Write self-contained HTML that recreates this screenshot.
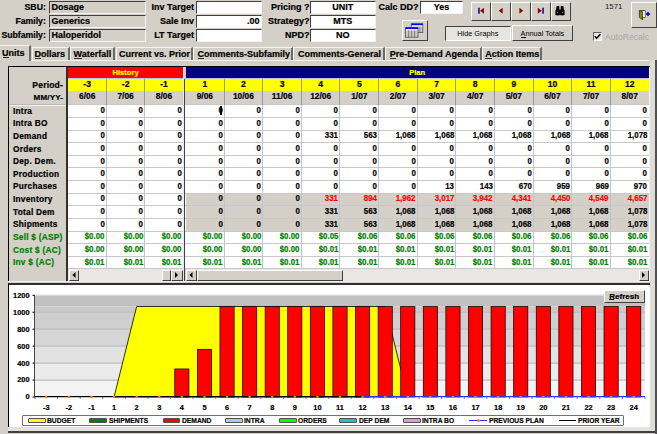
<!DOCTYPE html>
<html><head><meta charset="utf-8"><style>
html,body{margin:0;padding:0;}
body{width:657px;height:434px;overflow:hidden;position:relative;background:#d4d0c8;font-family:"Liberation Sans", sans-serif;font-weight:bold;}
.t{position:absolute;white-space:nowrap;-webkit-text-stroke:0.2px currentColor;}
.c{display:inline-block;transform:translateX(-50%);}
.r{position:absolute;}
</style></head><body>
<div class="t" style="top:2.94px;font-size:8.7px;line-height:8.7px;color:#000;right:611.2px;">SBU:</div>
<div class="r" style="left:49px;top:1px;width:97px;height:12.6px;background:#d4d0c8;border-top:1.5px solid #404040;border-left:1.5px solid #404040;border-bottom:1px solid #f4f4f4;border-right:1px solid #f4f4f4;box-sizing:border-box;"></div>
<div class="t" style="top:2.68px;font-size:9px;line-height:9px;color:#000;left:51.5px;">Dosage</div>
<div class="t" style="top:16.89px;font-size:8.7px;line-height:8.7px;color:#000;right:611.2px;">Family:</div>
<div class="r" style="left:49px;top:15.1px;width:97px;height:12.6px;background:#d4d0c8;border-top:1.5px solid #404040;border-left:1.5px solid #404040;border-bottom:1px solid #f4f4f4;border-right:1px solid #f4f4f4;box-sizing:border-box;"></div>
<div class="t" style="top:16.63px;font-size:9px;line-height:9px;color:#000;left:51.5px;">Generics</div>
<div class="t" style="top:30.84px;font-size:8.7px;line-height:8.7px;color:#000;right:611.2px;">Subfamily:</div>
<div class="r" style="left:49px;top:29.2px;width:97px;height:12.6px;background:#d4d0c8;border-top:1.5px solid #404040;border-left:1.5px solid #404040;border-bottom:1px solid #f4f4f4;border-right:1px solid #f4f4f4;box-sizing:border-box;"></div>
<div class="t" style="top:30.58px;font-size:9px;line-height:9px;color:#000;left:51.5px;">Haloperidol</div>
<div class="t" style="top:2.68px;font-size:9px;line-height:9px;color:#000;right:463.1px;">Inv Target</div>
<div class="r" style="left:196px;top:1px;width:65.5px;height:12.6px;background:#fff;border-top:1.5px solid #404040;border-left:1.5px solid #404040;border-bottom:1px solid #f4f4f4;border-right:1px solid #f4f4f4;box-sizing:border-box;"></div>
<div class="t" style="top:16.63px;font-size:9px;line-height:9px;color:#000;right:463.1px;">Sale Inv</div>
<div class="r" style="left:196px;top:15.1px;width:65.5px;height:12.6px;background:#fff;border-top:1.5px solid #404040;border-left:1.5px solid #404040;border-bottom:1px solid #f4f4f4;border-right:1px solid #f4f4f4;box-sizing:border-box;"></div>
<div class="t" style="top:16.63px;font-size:9px;line-height:9px;color:#000;right:397.5px;">.00</div>
<div class="t" style="top:30.58px;font-size:9px;line-height:9px;color:#000;right:463.1px;">LT Target</div>
<div class="r" style="left:196px;top:29.2px;width:65.5px;height:12.6px;background:#fff;border-top:1.5px solid #404040;border-left:1.5px solid #404040;border-bottom:1px solid #f4f4f4;border-right:1px solid #f4f4f4;box-sizing:border-box;"></div>
<div class="t" style="top:2.68px;font-size:9px;line-height:9px;color:#000;right:347.5px;">Pricing ?</div>
<div class="r" style="left:310px;top:1px;width:65.5px;height:12.6px;background:#fff;border-top:1.5px solid #404040;border-left:1.5px solid #404040;border-bottom:1px solid #f4f4f4;border-right:1px solid #f4f4f4;box-sizing:border-box;"></div>
<div class="t" style="top:2.68px;font-size:9px;line-height:9px;color:#000;left:342.8px;width:0;text-align:center;"><span class="c">UNIT</span></div>
<div class="t" style="top:16.63px;font-size:9px;line-height:9px;color:#000;right:347.5px;">Strategy?</div>
<div class="r" style="left:310px;top:15.1px;width:65.5px;height:12.6px;background:#fff;border-top:1.5px solid #404040;border-left:1.5px solid #404040;border-bottom:1px solid #f4f4f4;border-right:1px solid #f4f4f4;box-sizing:border-box;"></div>
<div class="t" style="top:16.63px;font-size:9px;line-height:9px;color:#000;left:342.8px;width:0;text-align:center;"><span class="c">MTS</span></div>
<div class="t" style="top:30.58px;font-size:9px;line-height:9px;color:#000;right:347.5px;">NPD?</div>
<div class="r" style="left:310px;top:29.2px;width:65.5px;height:12.6px;background:#fff;border-top:1.5px solid #404040;border-left:1.5px solid #404040;border-bottom:1px solid #f4f4f4;border-right:1px solid #f4f4f4;box-sizing:border-box;"></div>
<div class="t" style="top:30.58px;font-size:9px;line-height:9px;color:#000;left:342.8px;width:0;text-align:center;"><span class="c">NO</span></div>
<div class="t" style="top:2.68px;font-size:9px;line-height:9px;color:#000;left:378.5px;">Calc DD?</div>
<div class="r" style="left:420px;top:1px;width:43px;height:12.6px;background:#fff;border-top:1.5px solid #404040;border-left:1.5px solid #404040;border-bottom:1px solid #f4f4f4;border-right:1px solid #f4f4f4;box-sizing:border-box;"></div>
<div class="t" style="top:2.68px;font-size:9px;line-height:9px;color:#000;left:441.5px;width:0;text-align:center;"><span class="c">Yes</span></div>
<div class="r" style="left:402px;top:20px;width:26px;height:20.5px;background:#d4d0c8;border-top:1px solid #fff;border-left:1px solid #fff;border-bottom:1.6px solid #404040;border-right:1.6px solid #404040;box-sizing:border-box;"></div>
<svg class="r" style="left:0;top:0" width="657" height="45" viewBox="0 0 657 45">
<rect x="411.3" y="23.8" width="11.5" height="8.8" fill="#c8c8c8" stroke="#505050" stroke-width="0.8"/>
<rect x="411.3" y="23.6" width="11.5" height="1.8" fill="#0000ff"/>
<rect x="411.8" y="25.4" width="10.5" height="1.2" fill="#fff"/>
<path d="M414.2 26.6V32.4M417 26.6V32.4M419.8 26.6V32.4" stroke="#606060" stroke-width="0.7"/>
<rect x="405.5" y="27.6" width="12.5" height="9.6" fill="#c8c8c8" stroke="#505050" stroke-width="0.8"/>
<rect x="405.5" y="27.4" width="12.5" height="1.8" fill="#0000ff"/>
<rect x="406" y="29.2" width="11.5" height="1.2" fill="#fff"/>
<path d="M408.6 30.4V37M411.6 30.4V37M414.6 30.4V37" stroke="#606060" stroke-width="0.7"/>
</svg>
<div class="r" style="left:471px;top:2px;width:20px;height:19px;background:#d4d0c8;border-top:1px solid #fff;border-left:1px solid #fff;border-bottom:1.6px solid #404040;border-right:1.6px solid #404040;box-sizing:border-box;"></div>
<div class="r" style="left:491px;top:2px;width:20px;height:19px;background:#d4d0c8;border-top:1px solid #fff;border-left:1px solid #fff;border-bottom:1.6px solid #404040;border-right:1.6px solid #404040;box-sizing:border-box;"></div>
<div class="r" style="left:511px;top:2px;width:20px;height:19px;background:#d4d0c8;border-top:1px solid #fff;border-left:1px solid #fff;border-bottom:1.6px solid #404040;border-right:1.6px solid #404040;box-sizing:border-box;"></div>
<div class="r" style="left:531px;top:2px;width:20px;height:19px;background:#d4d0c8;border-top:1px solid #fff;border-left:1px solid #fff;border-bottom:1.6px solid #404040;border-right:1.6px solid #404040;box-sizing:border-box;"></div>
<div class="r" style="left:551px;top:2px;width:20px;height:19px;background:#d4d0c8;border-top:1px solid #fff;border-left:1px solid #fff;border-bottom:1.6px solid #404040;border-right:1.6px solid #404040;box-sizing:border-box;"></div>
<svg class="r" style="left:0;top:0" width="657" height="45" viewBox="0 0 657 45">
<rect x="478.2" y="7.7" width="1.5" height="6" fill="#0000a0"/>
<path d="M480 10.7L484 7.7V13.7Z" fill="#900000"/>
<path d="M498.8 10.7L502.6 7.7V13.7Z" fill="#900000"/>
<path d="M523.2 10.7L519.4 7.7V13.7Z" fill="#900000"/>
<path d="M541.8 10.7L537.8 7.7V13.7Z" fill="#900000"/>
<rect x="542.3" y="7.7" width="1.5" height="6" fill="#0000a0"/>
<g fill="#000">
<path d="M556.6 6H559.3V9.2L560 10V14.6H555.4V10.6L556.2 9.2Z"/>
<path d="M563.4 6H560.7V9.2L560 10V14.6H564.6V10.6L563.8 9.2Z"/>
<ellipse cx="557.7" cy="14.4" rx="2.3" ry="1.1"/><ellipse cx="562.3" cy="14.4" rx="2.3" ry="1.1"/>
</g>
<circle cx="557.4" cy="12.6" r="0.6" fill="#a0a0a0"/><circle cx="562.6" cy="12.6" r="0.6" fill="#a0a0a0"/>
<rect x="403" y="21" width="1" height="1" fill="none"/>
</svg>
<div class="t" style="top:3.2px;font-size:7.8px;line-height:7.8px;color:#202020;font-weight:normal;-webkit-text-stroke:0;left:605px;">1571</div>
<div class="r" style="left:631px;top:2px;width:25.5px;height:25.5px;background:#d4d0c8;border-top:1px solid #fff;border-left:1px solid #fff;border-bottom:1.6px solid #404040;border-right:1.6px solid #404040;box-sizing:border-box;"></div>
<svg class="r" style="left:0;top:0" width="657" height="30" viewBox="0 0 657 30">
<path d="M639.6 10.5H645.2V17.3H642.5" fill="#fff" stroke="#303030" stroke-width="0.8"/>
<rect x="642" y="11" width="2.6" height="6" fill="#fff"/>
<path d="M639.4 10.6L642.6 11.8V19.8L639.4 17.6Z" fill="#8a8a00" stroke="#202000" stroke-width="0.7"/>
<path d="M648 11.8L650.3 14L648 16.2L645.7 14Z" fill="#0000b0"/>
</svg>
<div class="r" style="left:444.5px;top:25.5px;width:66px;height:15px;background:#e6e4df;border-top:1.5px solid #404040;border-left:1.5px solid #404040;border-bottom:1px solid #fff;border-right:1px solid #fff;box-sizing:border-box;"></div>
<div class="t" style="top:30.42px;font-size:7.3px;line-height:7.3px;color:#000;font-weight:normal;-webkit-text-stroke:0;left:477.8px;width:0;text-align:center;"><span class="c">Hide Graphs</span></div>
<div class="r" style="left:512px;top:25px;width:61px;height:16px;background:#d4d0c8;border-top:1px solid #fff;border-left:1px solid #fff;border-bottom:1.6px solid #404040;border-right:1.6px solid #404040;box-sizing:border-box;"></div>
<div class="t" style="top:30.12px;font-size:7.3px;line-height:7.3px;color:#000;font-weight:normal;-webkit-text-stroke:0;left:542.4px;width:0;text-align:center;"><span class="c">Annual Totals</span></div>
<div class="r" style="left:520.8px;top:37px;width:5px;height:0.8px;background:#000;"></div>
<div class="r" style="left:593px;top:32px;width:8.5px;height:8.5px;background:#e8e6e2;border-top:1px solid #606060;border-left:1px solid #606060;border-bottom:1px solid #fff;border-right:1px solid #fff;box-sizing:border-box;"></div>
<svg class="r" style="left:593px;top:32px" width="9" height="9" viewBox="0 0 9 9"><path d="M1.8 4.2L3.6 6.2L7.4 2.2" stroke="#000" stroke-width="1.5" fill="none"/></svg>
<div class="t" style="top:32.72px;font-size:8.6px;line-height:8.6px;color:#a8a8a8;font-weight:normal;-webkit-text-stroke:0;left:605px;">AutoRecalc</div>
<div class="r" style="left:0px;top:60px;width:657px;height:1px;background:#f4f3f0;"></div>
<div class="r" style="left:0px;top:45px;width:31px;height:16px;background:#d4d0c8;border-top:1px solid #f4f3f0;border-right:2px solid #6a6a6a;box-sizing:border-box;"></div>
<div class="t" style="top:48.58px;font-size:9px;line-height:9px;color:#000;left:13.2px;width:0;text-align:center;"><span class="c"><span id="tab0">Units</span></span></div>
<div class="r" style="left:2.6px;top:57px;width:6.2px;height:0.9px;background:#202020;"></div>
<div class="r" style="left:32px;top:47px;width:37.5px;height:13px;background:#d4d0c8;border-top:1px solid #f4f3f0;border-left:1px solid #f4f3f0;border-right:2px solid #6a6a6a;box-sizing:border-box;"></div>
<div class="t" style="top:49.58px;font-size:9px;line-height:9px;color:#000;left:49.85px;width:0;text-align:center;"><span class="c">Dollars</span></div>
<div class="r" style="left:34.6px;top:58.2px;width:6.5px;height:0.9px;background:#303030;"></div>
<div class="r" style="left:70px;top:47px;width:45px;height:13px;background:#d4d0c8;border-top:1px solid #f4f3f0;border-left:1px solid #f4f3f0;border-right:2px solid #6a6a6a;box-sizing:border-box;"></div>
<div class="t" style="top:49.58px;font-size:9px;line-height:9px;color:#000;left:92.35px;width:0;text-align:center;"><span class="c">Waterfall</span></div>
<div class="r" style="left:73.51px;top:58.2px;width:8.5px;height:0.9px;background:#303030;"></div>
<div class="r" style="left:115.5px;top:47px;width:77px;height:13px;background:#d4d0c8;border-top:1px solid #f4f3f0;border-left:1px solid #f4f3f0;border-right:2px solid #6a6a6a;box-sizing:border-box;"></div>
<div class="t" style="top:49.58px;font-size:9px;line-height:9px;color:#000;left:154.6px;width:0;text-align:center;"><span class="c">Current vs. Prior</span></div>
<div class="r" style="left:193px;top:47px;width:99.5px;height:13px;background:#d4d0c8;border-top:1px solid #f4f3f0;border-left:1px solid #f4f3f0;border-right:2px solid #6a6a6a;box-sizing:border-box;"></div>
<div class="t" style="top:49.58px;font-size:9px;line-height:9px;color:#000;left:243.75px;width:0;text-align:center;"><span class="c">Comments-Subfamily</span></div>
<div class="r" style="left:197.5px;top:58.2px;width:6.5px;height:0.9px;background:#303030;"></div>
<div class="r" style="left:293px;top:47px;width:91.5px;height:13px;background:#d4d0c8;border-top:1px solid #f4f3f0;border-left:1px solid #f4f3f0;border-right:2px solid #6a6a6a;box-sizing:border-box;"></div>
<div class="t" style="top:49.58px;font-size:9px;line-height:9px;color:#000;left:339.5px;width:0;text-align:center;"><span class="c">Comments-General</span></div>
<div class="r" style="left:385px;top:47px;width:96.5px;height:13px;background:#d4d0c8;border-top:1px solid #f4f3f0;border-left:1px solid #f4f3f0;border-right:2px solid #6a6a6a;box-sizing:border-box;"></div>
<div class="t" style="top:49.58px;font-size:9px;line-height:9px;color:#000;left:433.85px;width:0;text-align:center;"><span class="c">Pre-Demand Agenda</span></div>
<div class="r" style="left:389.76px;top:58.2px;width:6px;height:0.9px;background:#303030;"></div>
<div class="r" style="left:482px;top:47px;width:60px;height:13px;background:#d4d0c8;border-top:1px solid #f4f3f0;border-left:1px solid #f4f3f0;border-right:2px solid #6a6a6a;box-sizing:border-box;"></div>
<div class="t" style="top:49.58px;font-size:9px;line-height:9px;color:#000;left:512.2px;width:0;text-align:center;"><span class="c">Action Items</span></div>
<div class="r" style="left:485.2px;top:58.2px;width:6.5px;height:0.9px;background:#303030;"></div>
<div class="r" style="left:8px;top:66px;width:649px;height:215.5px;background:#d4d0c8;border-top:1px solid #000;border-left:1px solid #000;box-sizing:border-box;"></div>
<div class="r" style="left:68px;top:67px;width:115.2px;height:10.5px;background:#ff0000;"></div>
<div class="t" style="top:68.57px;font-size:7.6px;line-height:7.6px;color:#ffff00;left:125.6px;width:0;text-align:center;"><span class="c">History</span></div>
<div class="r" style="left:185.5px;top:67px;width:463.5px;height:10.5px;background:#000080;"></div>
<div class="t" style="top:68.77px;font-size:7.6px;line-height:7.6px;color:#ffff00;left:417.2px;width:0;text-align:center;"><span class="c">Plan</span></div>
<div class="r" style="left:68px;top:77.5px;width:581px;height:1.5px;background:#c4c4d0;"></div>
<div class="r" style="left:68px;top:78.6px;width:581px;height:0.6px;background:#707070;"></div>
<div class="r" style="left:68px;top:79.2px;width:581px;height:12px;background:#ffff00;"></div>
<div class="r" style="left:68px;top:104.8px;width:581px;height:164.19px;background:#fff;"></div>
<div class="r" style="left:185.5px;top:193.21px;width:463.5px;height:37.89px;background:#d4d0c8;"></div>
<div class="r" style="left:68px;top:104.3px;width:581px;height:1px;background:#c8c8c8;"></div>
<div class="r" style="left:68px;top:116.93px;width:581px;height:1px;background:#c8c8c8;"></div>
<div class="r" style="left:68px;top:129.56px;width:581px;height:1px;background:#c8c8c8;"></div>
<div class="r" style="left:68px;top:142.19px;width:581px;height:1px;background:#c8c8c8;"></div>
<div class="r" style="left:68px;top:154.82px;width:581px;height:1px;background:#c8c8c8;"></div>
<div class="r" style="left:68px;top:167.45px;width:581px;height:1px;background:#c8c8c8;"></div>
<div class="r" style="left:68px;top:180.08px;width:581px;height:1px;background:#c8c8c8;"></div>
<div class="r" style="left:68px;top:192.71px;width:581px;height:1px;background:#c8c8c8;"></div>
<div class="r" style="left:68px;top:205.34px;width:581px;height:1px;background:#c8c8c8;"></div>
<div class="r" style="left:68px;top:217.97px;width:581px;height:1px;background:#c8c8c8;"></div>
<div class="r" style="left:68px;top:230.6px;width:581px;height:1px;background:#c8c8c8;"></div>
<div class="r" style="left:68px;top:243.23px;width:581px;height:1px;background:#c8c8c8;"></div>
<div class="r" style="left:68px;top:255.86px;width:581px;height:1px;background:#c8c8c8;"></div>
<div class="r" style="left:68px;top:268.49px;width:581px;height:1px;background:#c8c8c8;"></div>
<div class="r" style="left:9px;top:103.6px;width:57px;height:1px;background:#b8b8b8;"></div>
<div class="r" style="left:9px;top:104.6px;width:57px;height:0.8px;background:#f0f0f0;"></div>
<div class="r" style="left:105.8px;top:79.2px;width:1px;height:25.6px;background:#9a9a9a;"></div>
<div class="r" style="left:105.8px;top:104.8px;width:1px;height:164.19px;background:#c4c4c4;"></div>
<div class="r" style="left:144.2px;top:79.2px;width:1px;height:25.6px;background:#9a9a9a;"></div>
<div class="r" style="left:144.2px;top:104.8px;width:1px;height:164.19px;background:#c4c4c4;"></div>
<div class="r" style="left:223.53px;top:79.2px;width:1px;height:25.6px;background:#9a9a9a;"></div>
<div class="r" style="left:223.53px;top:104.8px;width:1px;height:164.19px;background:#c4c4c4;"></div>
<div class="r" style="left:262.15px;top:79.2px;width:1px;height:25.6px;background:#9a9a9a;"></div>
<div class="r" style="left:262.15px;top:104.8px;width:1px;height:164.19px;background:#c4c4c4;"></div>
<div class="r" style="left:300.77px;top:79.2px;width:1px;height:25.6px;background:#9a9a9a;"></div>
<div class="r" style="left:300.77px;top:104.8px;width:1px;height:164.19px;background:#c4c4c4;"></div>
<div class="r" style="left:339.4px;top:79.2px;width:1px;height:25.6px;background:#9a9a9a;"></div>
<div class="r" style="left:339.4px;top:104.8px;width:1px;height:164.19px;background:#c4c4c4;"></div>
<div class="r" style="left:378.02px;top:79.2px;width:1px;height:25.6px;background:#9a9a9a;"></div>
<div class="r" style="left:378.02px;top:104.8px;width:1px;height:164.19px;background:#c4c4c4;"></div>
<div class="r" style="left:416.65px;top:79.2px;width:1px;height:25.6px;background:#9a9a9a;"></div>
<div class="r" style="left:416.65px;top:104.8px;width:1px;height:164.19px;background:#c4c4c4;"></div>
<div class="r" style="left:455.27px;top:79.2px;width:1px;height:25.6px;background:#9a9a9a;"></div>
<div class="r" style="left:455.27px;top:104.8px;width:1px;height:164.19px;background:#c4c4c4;"></div>
<div class="r" style="left:493.9px;top:79.2px;width:1px;height:25.6px;background:#9a9a9a;"></div>
<div class="r" style="left:493.9px;top:104.8px;width:1px;height:164.19px;background:#c4c4c4;"></div>
<div class="r" style="left:532.52px;top:79.2px;width:1px;height:25.6px;background:#9a9a9a;"></div>
<div class="r" style="left:532.52px;top:104.8px;width:1px;height:164.19px;background:#c4c4c4;"></div>
<div class="r" style="left:571.15px;top:79.2px;width:1px;height:25.6px;background:#9a9a9a;"></div>
<div class="r" style="left:571.15px;top:104.8px;width:1px;height:164.19px;background:#c4c4c4;"></div>
<div class="r" style="left:609.77px;top:79.2px;width:1px;height:25.6px;background:#9a9a9a;"></div>
<div class="r" style="left:609.77px;top:104.8px;width:1px;height:164.19px;background:#c4c4c4;"></div>
<div class="r" style="left:66px;top:67px;width:2px;height:214px;background:#303030;"></div>
<div class="r" style="left:183.4px;top:67px;width:0.9px;height:201.99px;background:#e8e8e8;"></div>
<div class="r" style="left:184.2px;top:79px;width:1.3px;height:202.99px;background:#404040;"></div>
<div class="r" style="left:649.2px;top:67px;width:1px;height:214px;background:#f6f6f6;"></div>
<div class="t" style="top:80.22px;font-size:8.6px;line-height:8.6px;color:#000;left:87.2px;width:0;text-align:center;"><span class="c">-3</span></div>
<div class="t" style="top:92.49px;font-size:8.4px;line-height:8.4px;color:#000;left:87.2px;width:0;text-align:center;"><span class="c">6/06</span></div>
<div class="t" style="top:80.22px;font-size:8.6px;line-height:8.6px;color:#000;left:125.6px;width:0;text-align:center;"><span class="c">-2</span></div>
<div class="t" style="top:92.49px;font-size:8.4px;line-height:8.4px;color:#000;left:125.6px;width:0;text-align:center;"><span class="c">7/06</span></div>
<div class="t" style="top:80.22px;font-size:8.6px;line-height:8.6px;color:#000;left:164px;width:0;text-align:center;"><span class="c">-1</span></div>
<div class="t" style="top:92.49px;font-size:8.4px;line-height:8.4px;color:#000;left:164px;width:0;text-align:center;"><span class="c">8/06</span></div>
<div class="t" style="top:80.22px;font-size:8.6px;line-height:8.6px;color:#000;left:204.81px;width:0;text-align:center;"><span class="c">1</span></div>
<div class="t" style="top:92.49px;font-size:8.4px;line-height:8.4px;color:#000;left:204.81px;width:0;text-align:center;"><span class="c">9/06</span></div>
<div class="t" style="top:80.22px;font-size:8.6px;line-height:8.6px;color:#000;left:243.44px;width:0;text-align:center;"><span class="c">2</span></div>
<div class="t" style="top:92.49px;font-size:8.4px;line-height:8.4px;color:#000;left:243.44px;width:0;text-align:center;"><span class="c">10/06</span></div>
<div class="t" style="top:80.22px;font-size:8.6px;line-height:8.6px;color:#000;left:282.06px;width:0;text-align:center;"><span class="c">3</span></div>
<div class="t" style="top:92.49px;font-size:8.4px;line-height:8.4px;color:#000;left:282.06px;width:0;text-align:center;"><span class="c">11/06</span></div>
<div class="t" style="top:80.22px;font-size:8.6px;line-height:8.6px;color:#000;left:320.69px;width:0;text-align:center;"><span class="c">4</span></div>
<div class="t" style="top:92.49px;font-size:8.4px;line-height:8.4px;color:#000;left:320.69px;width:0;text-align:center;"><span class="c">12/06</span></div>
<div class="t" style="top:80.22px;font-size:8.6px;line-height:8.6px;color:#000;left:359.31px;width:0;text-align:center;"><span class="c">5</span></div>
<div class="t" style="top:92.49px;font-size:8.4px;line-height:8.4px;color:#000;left:359.31px;width:0;text-align:center;"><span class="c">1/07</span></div>
<div class="t" style="top:80.22px;font-size:8.6px;line-height:8.6px;color:#000;left:397.94px;width:0;text-align:center;"><span class="c">6</span></div>
<div class="t" style="top:92.49px;font-size:8.4px;line-height:8.4px;color:#000;left:397.94px;width:0;text-align:center;"><span class="c">2/07</span></div>
<div class="t" style="top:80.22px;font-size:8.6px;line-height:8.6px;color:#000;left:436.56px;width:0;text-align:center;"><span class="c">7</span></div>
<div class="t" style="top:92.49px;font-size:8.4px;line-height:8.4px;color:#000;left:436.56px;width:0;text-align:center;"><span class="c">3/07</span></div>
<div class="t" style="top:80.22px;font-size:8.6px;line-height:8.6px;color:#000;left:475.19px;width:0;text-align:center;"><span class="c">8</span></div>
<div class="t" style="top:92.49px;font-size:8.4px;line-height:8.4px;color:#000;left:475.19px;width:0;text-align:center;"><span class="c">4/07</span></div>
<div class="t" style="top:80.22px;font-size:8.6px;line-height:8.6px;color:#000;left:513.81px;width:0;text-align:center;"><span class="c">9</span></div>
<div class="t" style="top:92.49px;font-size:8.4px;line-height:8.4px;color:#000;left:513.81px;width:0;text-align:center;"><span class="c">5/07</span></div>
<div class="t" style="top:80.22px;font-size:8.6px;line-height:8.6px;color:#000;left:552.44px;width:0;text-align:center;"><span class="c">10</span></div>
<div class="t" style="top:92.49px;font-size:8.4px;line-height:8.4px;color:#000;left:552.44px;width:0;text-align:center;"><span class="c">6/07</span></div>
<div class="t" style="top:80.22px;font-size:8.6px;line-height:8.6px;color:#000;left:591.06px;width:0;text-align:center;"><span class="c">11</span></div>
<div class="t" style="top:92.49px;font-size:8.4px;line-height:8.4px;color:#000;left:591.06px;width:0;text-align:center;"><span class="c">7/07</span></div>
<div class="t" style="top:80.22px;font-size:8.6px;line-height:8.6px;color:#000;left:629.69px;width:0;text-align:center;"><span class="c">12</span></div>
<div class="t" style="top:92.49px;font-size:8.4px;line-height:8.4px;color:#000;left:629.69px;width:0;text-align:center;"><span class="c">8/07</span></div>
<div class="t" style="top:80.72px;font-size:8.6px;line-height:8.6px;color:#000;letter-spacing:0.15px;right:594px;">Period-</div>
<div class="t" style="top:93.74px;font-size:8.1px;line-height:8.1px;color:#000;letter-spacing:0.1px;right:594px;">MM/YY-</div>
<div class="t" style="top:106.67px;font-size:8.3px;line-height:8.3px;color:#000;letter-spacing:0.25px;left:13px;">Intra</div>
<div class="t" style="top:106.08px;font-size:9px;line-height:9px;color:#000;right:552px;transform:scaleX(0.88);transform-origin:100% 50%;">0</div>
<div class="t" style="top:106.08px;font-size:9px;line-height:9px;color:#000;right:513.6px;transform:scaleX(0.88);transform-origin:100% 50%;">0</div>
<div class="t" style="top:106.08px;font-size:9px;line-height:9px;color:#000;right:475.2px;transform:scaleX(0.88);transform-origin:100% 50%;">0</div>
<div class="t" style="top:106.08px;font-size:9px;line-height:9px;color:#000;right:434.48px;transform:scaleX(0.88);transform-origin:100% 50%;">0</div>
<div class="t" style="top:106.08px;font-size:9px;line-height:9px;color:#000;right:395.85px;transform:scaleX(0.88);transform-origin:100% 50%;">0</div>
<div class="t" style="top:106.08px;font-size:9px;line-height:9px;color:#000;right:357.23px;transform:scaleX(0.88);transform-origin:100% 50%;">0</div>
<div class="t" style="top:106.08px;font-size:9px;line-height:9px;color:#000;right:318.6px;transform:scaleX(0.88);transform-origin:100% 50%;">0</div>
<div class="t" style="top:106.08px;font-size:9px;line-height:9px;color:#000;right:279.98px;transform:scaleX(0.88);transform-origin:100% 50%;">0</div>
<div class="t" style="top:106.08px;font-size:9px;line-height:9px;color:#000;right:241.35px;transform:scaleX(0.88);transform-origin:100% 50%;">0</div>
<div class="t" style="top:106.08px;font-size:9px;line-height:9px;color:#000;right:202.73px;transform:scaleX(0.88);transform-origin:100% 50%;">0</div>
<div class="t" style="top:106.08px;font-size:9px;line-height:9px;color:#000;right:164.1px;transform:scaleX(0.88);transform-origin:100% 50%;">0</div>
<div class="t" style="top:106.08px;font-size:9px;line-height:9px;color:#000;right:125.48px;transform:scaleX(0.88);transform-origin:100% 50%;">0</div>
<div class="t" style="top:106.08px;font-size:9px;line-height:9px;color:#000;right:86.85px;transform:scaleX(0.88);transform-origin:100% 50%;">0</div>
<div class="t" style="top:106.08px;font-size:9px;line-height:9px;color:#000;right:48.23px;transform:scaleX(0.88);transform-origin:100% 50%;">0</div>
<div class="t" style="top:106.08px;font-size:9px;line-height:9px;color:#000;right:9.6px;transform:scaleX(0.88);transform-origin:100% 50%;">0</div>
<div class="t" style="top:119.3px;font-size:8.3px;line-height:8.3px;color:#000;letter-spacing:0.25px;left:13px;">Intra BO</div>
<div class="t" style="top:118.71px;font-size:9px;line-height:9px;color:#000;right:552px;transform:scaleX(0.88);transform-origin:100% 50%;">0</div>
<div class="t" style="top:118.71px;font-size:9px;line-height:9px;color:#000;right:513.6px;transform:scaleX(0.88);transform-origin:100% 50%;">0</div>
<div class="t" style="top:118.71px;font-size:9px;line-height:9px;color:#000;right:475.2px;transform:scaleX(0.88);transform-origin:100% 50%;">0</div>
<div class="t" style="top:118.71px;font-size:9px;line-height:9px;color:#000;right:434.48px;transform:scaleX(0.88);transform-origin:100% 50%;">0</div>
<div class="t" style="top:118.71px;font-size:9px;line-height:9px;color:#000;right:395.85px;transform:scaleX(0.88);transform-origin:100% 50%;">0</div>
<div class="t" style="top:118.71px;font-size:9px;line-height:9px;color:#000;right:357.23px;transform:scaleX(0.88);transform-origin:100% 50%;">0</div>
<div class="t" style="top:118.71px;font-size:9px;line-height:9px;color:#000;right:318.6px;transform:scaleX(0.88);transform-origin:100% 50%;">0</div>
<div class="t" style="top:118.71px;font-size:9px;line-height:9px;color:#000;right:279.98px;transform:scaleX(0.88);transform-origin:100% 50%;">0</div>
<div class="t" style="top:118.71px;font-size:9px;line-height:9px;color:#000;right:241.35px;transform:scaleX(0.88);transform-origin:100% 50%;">0</div>
<div class="t" style="top:118.71px;font-size:9px;line-height:9px;color:#000;right:202.73px;transform:scaleX(0.88);transform-origin:100% 50%;">0</div>
<div class="t" style="top:118.71px;font-size:9px;line-height:9px;color:#000;right:164.1px;transform:scaleX(0.88);transform-origin:100% 50%;">0</div>
<div class="t" style="top:118.71px;font-size:9px;line-height:9px;color:#000;right:125.48px;transform:scaleX(0.88);transform-origin:100% 50%;">0</div>
<div class="t" style="top:118.71px;font-size:9px;line-height:9px;color:#000;right:86.85px;transform:scaleX(0.88);transform-origin:100% 50%;">0</div>
<div class="t" style="top:118.71px;font-size:9px;line-height:9px;color:#000;right:48.23px;transform:scaleX(0.88);transform-origin:100% 50%;">0</div>
<div class="t" style="top:118.71px;font-size:9px;line-height:9px;color:#000;right:9.6px;transform:scaleX(0.88);transform-origin:100% 50%;">0</div>
<div class="t" style="top:131.93px;font-size:8.3px;line-height:8.3px;color:#000;letter-spacing:0.25px;left:13px;">Demand</div>
<div class="t" style="top:131.34px;font-size:9px;line-height:9px;color:#000;right:552px;transform:scaleX(0.88);transform-origin:100% 50%;">0</div>
<div class="t" style="top:131.34px;font-size:9px;line-height:9px;color:#000;right:513.6px;transform:scaleX(0.88);transform-origin:100% 50%;">0</div>
<div class="t" style="top:131.34px;font-size:9px;line-height:9px;color:#000;right:475.2px;transform:scaleX(0.88);transform-origin:100% 50%;">0</div>
<div class="t" style="top:131.34px;font-size:9px;line-height:9px;color:#000;right:434.48px;transform:scaleX(0.88);transform-origin:100% 50%;">0</div>
<div class="t" style="top:131.34px;font-size:9px;line-height:9px;color:#000;right:395.85px;transform:scaleX(0.88);transform-origin:100% 50%;">0</div>
<div class="t" style="top:131.34px;font-size:9px;line-height:9px;color:#000;right:357.23px;transform:scaleX(0.88);transform-origin:100% 50%;">0</div>
<div class="t" style="top:131.34px;font-size:9px;line-height:9px;color:#000;right:318.6px;transform:scaleX(0.88);transform-origin:100% 50%;">331</div>
<div class="t" style="top:131.34px;font-size:9px;line-height:9px;color:#000;right:279.98px;transform:scaleX(0.88);transform-origin:100% 50%;">563</div>
<div class="t" style="top:131.34px;font-size:9px;line-height:9px;color:#000;right:241.35px;transform:scaleX(0.88);transform-origin:100% 50%;">1,068</div>
<div class="t" style="top:131.34px;font-size:9px;line-height:9px;color:#000;right:202.73px;transform:scaleX(0.88);transform-origin:100% 50%;">1,068</div>
<div class="t" style="top:131.34px;font-size:9px;line-height:9px;color:#000;right:164.1px;transform:scaleX(0.88);transform-origin:100% 50%;">1,068</div>
<div class="t" style="top:131.34px;font-size:9px;line-height:9px;color:#000;right:125.48px;transform:scaleX(0.88);transform-origin:100% 50%;">1,068</div>
<div class="t" style="top:131.34px;font-size:9px;line-height:9px;color:#000;right:86.85px;transform:scaleX(0.88);transform-origin:100% 50%;">1,068</div>
<div class="t" style="top:131.34px;font-size:9px;line-height:9px;color:#000;right:48.23px;transform:scaleX(0.88);transform-origin:100% 50%;">1,068</div>
<div class="t" style="top:131.34px;font-size:9px;line-height:9px;color:#000;right:9.6px;transform:scaleX(0.88);transform-origin:100% 50%;">1,078</div>
<div class="t" style="top:144.56px;font-size:8.3px;line-height:8.3px;color:#000;letter-spacing:0.25px;left:13px;">Orders</div>
<div class="t" style="top:143.97px;font-size:9px;line-height:9px;color:#000;right:552px;transform:scaleX(0.88);transform-origin:100% 50%;">0</div>
<div class="t" style="top:143.97px;font-size:9px;line-height:9px;color:#000;right:513.6px;transform:scaleX(0.88);transform-origin:100% 50%;">0</div>
<div class="t" style="top:143.97px;font-size:9px;line-height:9px;color:#000;right:475.2px;transform:scaleX(0.88);transform-origin:100% 50%;">0</div>
<div class="t" style="top:143.97px;font-size:9px;line-height:9px;color:#000;right:434.48px;transform:scaleX(0.88);transform-origin:100% 50%;">0</div>
<div class="t" style="top:143.97px;font-size:9px;line-height:9px;color:#000;right:395.85px;transform:scaleX(0.88);transform-origin:100% 50%;">0</div>
<div class="t" style="top:143.97px;font-size:9px;line-height:9px;color:#000;right:357.23px;transform:scaleX(0.88);transform-origin:100% 50%;">0</div>
<div class="t" style="top:143.97px;font-size:9px;line-height:9px;color:#000;right:318.6px;transform:scaleX(0.88);transform-origin:100% 50%;">0</div>
<div class="t" style="top:143.97px;font-size:9px;line-height:9px;color:#000;right:279.98px;transform:scaleX(0.88);transform-origin:100% 50%;">0</div>
<div class="t" style="top:143.97px;font-size:9px;line-height:9px;color:#000;right:241.35px;transform:scaleX(0.88);transform-origin:100% 50%;">0</div>
<div class="t" style="top:143.97px;font-size:9px;line-height:9px;color:#000;right:202.73px;transform:scaleX(0.88);transform-origin:100% 50%;">0</div>
<div class="t" style="top:143.97px;font-size:9px;line-height:9px;color:#000;right:164.1px;transform:scaleX(0.88);transform-origin:100% 50%;">0</div>
<div class="t" style="top:143.97px;font-size:9px;line-height:9px;color:#000;right:125.48px;transform:scaleX(0.88);transform-origin:100% 50%;">0</div>
<div class="t" style="top:143.97px;font-size:9px;line-height:9px;color:#000;right:86.85px;transform:scaleX(0.88);transform-origin:100% 50%;">0</div>
<div class="t" style="top:143.97px;font-size:9px;line-height:9px;color:#000;right:48.23px;transform:scaleX(0.88);transform-origin:100% 50%;">0</div>
<div class="t" style="top:143.97px;font-size:9px;line-height:9px;color:#000;right:9.6px;transform:scaleX(0.88);transform-origin:100% 50%;">0</div>
<div class="t" style="top:157.19px;font-size:8.3px;line-height:8.3px;color:#000;letter-spacing:0.25px;left:13px;">Dep. Dem.</div>
<div class="t" style="top:156.6px;font-size:9px;line-height:9px;color:#000;right:552px;transform:scaleX(0.88);transform-origin:100% 50%;">0</div>
<div class="t" style="top:156.6px;font-size:9px;line-height:9px;color:#000;right:513.6px;transform:scaleX(0.88);transform-origin:100% 50%;">0</div>
<div class="t" style="top:156.6px;font-size:9px;line-height:9px;color:#000;right:475.2px;transform:scaleX(0.88);transform-origin:100% 50%;">0</div>
<div class="t" style="top:156.6px;font-size:9px;line-height:9px;color:#000;right:434.48px;transform:scaleX(0.88);transform-origin:100% 50%;">0</div>
<div class="t" style="top:156.6px;font-size:9px;line-height:9px;color:#000;right:395.85px;transform:scaleX(0.88);transform-origin:100% 50%;">0</div>
<div class="t" style="top:156.6px;font-size:9px;line-height:9px;color:#000;right:357.23px;transform:scaleX(0.88);transform-origin:100% 50%;">0</div>
<div class="t" style="top:156.6px;font-size:9px;line-height:9px;color:#000;right:318.6px;transform:scaleX(0.88);transform-origin:100% 50%;">0</div>
<div class="t" style="top:156.6px;font-size:9px;line-height:9px;color:#000;right:279.98px;transform:scaleX(0.88);transform-origin:100% 50%;">0</div>
<div class="t" style="top:156.6px;font-size:9px;line-height:9px;color:#000;right:241.35px;transform:scaleX(0.88);transform-origin:100% 50%;">0</div>
<div class="t" style="top:156.6px;font-size:9px;line-height:9px;color:#000;right:202.73px;transform:scaleX(0.88);transform-origin:100% 50%;">0</div>
<div class="t" style="top:156.6px;font-size:9px;line-height:9px;color:#000;right:164.1px;transform:scaleX(0.88);transform-origin:100% 50%;">0</div>
<div class="t" style="top:156.6px;font-size:9px;line-height:9px;color:#000;right:125.48px;transform:scaleX(0.88);transform-origin:100% 50%;">0</div>
<div class="t" style="top:156.6px;font-size:9px;line-height:9px;color:#000;right:86.85px;transform:scaleX(0.88);transform-origin:100% 50%;">0</div>
<div class="t" style="top:156.6px;font-size:9px;line-height:9px;color:#000;right:48.23px;transform:scaleX(0.88);transform-origin:100% 50%;">0</div>
<div class="t" style="top:156.6px;font-size:9px;line-height:9px;color:#000;right:9.6px;transform:scaleX(0.88);transform-origin:100% 50%;">0</div>
<div class="t" style="top:169.82px;font-size:8.3px;line-height:8.3px;color:#000;letter-spacing:0.25px;left:13px;">Production</div>
<div class="t" style="top:169.23px;font-size:9px;line-height:9px;color:#000;right:552px;transform:scaleX(0.88);transform-origin:100% 50%;">0</div>
<div class="t" style="top:169.23px;font-size:9px;line-height:9px;color:#000;right:513.6px;transform:scaleX(0.88);transform-origin:100% 50%;">0</div>
<div class="t" style="top:169.23px;font-size:9px;line-height:9px;color:#000;right:475.2px;transform:scaleX(0.88);transform-origin:100% 50%;">0</div>
<div class="t" style="top:169.23px;font-size:9px;line-height:9px;color:#000;right:434.48px;transform:scaleX(0.88);transform-origin:100% 50%;">0</div>
<div class="t" style="top:169.23px;font-size:9px;line-height:9px;color:#000;right:395.85px;transform:scaleX(0.88);transform-origin:100% 50%;">0</div>
<div class="t" style="top:169.23px;font-size:9px;line-height:9px;color:#000;right:357.23px;transform:scaleX(0.88);transform-origin:100% 50%;">0</div>
<div class="t" style="top:169.23px;font-size:9px;line-height:9px;color:#000;right:318.6px;transform:scaleX(0.88);transform-origin:100% 50%;">0</div>
<div class="t" style="top:169.23px;font-size:9px;line-height:9px;color:#000;right:279.98px;transform:scaleX(0.88);transform-origin:100% 50%;">0</div>
<div class="t" style="top:169.23px;font-size:9px;line-height:9px;color:#000;right:241.35px;transform:scaleX(0.88);transform-origin:100% 50%;">0</div>
<div class="t" style="top:169.23px;font-size:9px;line-height:9px;color:#000;right:202.73px;transform:scaleX(0.88);transform-origin:100% 50%;">0</div>
<div class="t" style="top:169.23px;font-size:9px;line-height:9px;color:#000;right:164.1px;transform:scaleX(0.88);transform-origin:100% 50%;">0</div>
<div class="t" style="top:169.23px;font-size:9px;line-height:9px;color:#000;right:125.48px;transform:scaleX(0.88);transform-origin:100% 50%;">0</div>
<div class="t" style="top:169.23px;font-size:9px;line-height:9px;color:#000;right:86.85px;transform:scaleX(0.88);transform-origin:100% 50%;">0</div>
<div class="t" style="top:169.23px;font-size:9px;line-height:9px;color:#000;right:48.23px;transform:scaleX(0.88);transform-origin:100% 50%;">0</div>
<div class="t" style="top:169.23px;font-size:9px;line-height:9px;color:#000;right:9.6px;transform:scaleX(0.88);transform-origin:100% 50%;">0</div>
<div class="t" style="top:182.45px;font-size:8.3px;line-height:8.3px;color:#000;letter-spacing:0.25px;left:13px;">Purchases</div>
<div class="t" style="top:181.86px;font-size:9px;line-height:9px;color:#000;right:552px;transform:scaleX(0.88);transform-origin:100% 50%;">0</div>
<div class="t" style="top:181.86px;font-size:9px;line-height:9px;color:#000;right:513.6px;transform:scaleX(0.88);transform-origin:100% 50%;">0</div>
<div class="t" style="top:181.86px;font-size:9px;line-height:9px;color:#000;right:475.2px;transform:scaleX(0.88);transform-origin:100% 50%;">0</div>
<div class="t" style="top:181.86px;font-size:9px;line-height:9px;color:#000;right:434.48px;transform:scaleX(0.88);transform-origin:100% 50%;">0</div>
<div class="t" style="top:181.86px;font-size:9px;line-height:9px;color:#000;right:395.85px;transform:scaleX(0.88);transform-origin:100% 50%;">0</div>
<div class="t" style="top:181.86px;font-size:9px;line-height:9px;color:#000;right:357.23px;transform:scaleX(0.88);transform-origin:100% 50%;">0</div>
<div class="t" style="top:181.86px;font-size:9px;line-height:9px;color:#000;right:318.6px;transform:scaleX(0.88);transform-origin:100% 50%;">0</div>
<div class="t" style="top:181.86px;font-size:9px;line-height:9px;color:#000;right:279.98px;transform:scaleX(0.88);transform-origin:100% 50%;">0</div>
<div class="t" style="top:181.86px;font-size:9px;line-height:9px;color:#000;right:241.35px;transform:scaleX(0.88);transform-origin:100% 50%;">0</div>
<div class="t" style="top:181.86px;font-size:9px;line-height:9px;color:#000;right:202.73px;transform:scaleX(0.88);transform-origin:100% 50%;">13</div>
<div class="t" style="top:181.86px;font-size:9px;line-height:9px;color:#000;right:164.1px;transform:scaleX(0.88);transform-origin:100% 50%;">143</div>
<div class="t" style="top:181.86px;font-size:9px;line-height:9px;color:#000;right:125.48px;transform:scaleX(0.88);transform-origin:100% 50%;">670</div>
<div class="t" style="top:181.86px;font-size:9px;line-height:9px;color:#000;right:86.85px;transform:scaleX(0.88);transform-origin:100% 50%;">959</div>
<div class="t" style="top:181.86px;font-size:9px;line-height:9px;color:#000;right:48.23px;transform:scaleX(0.88);transform-origin:100% 50%;">969</div>
<div class="t" style="top:181.86px;font-size:9px;line-height:9px;color:#000;right:9.6px;transform:scaleX(0.88);transform-origin:100% 50%;">970</div>
<div class="t" style="top:195.08px;font-size:8.3px;line-height:8.3px;color:#000;letter-spacing:0.25px;left:13px;">Inventory</div>
<div class="t" style="top:194.49px;font-size:9px;line-height:9px;color:#000;right:552px;transform:scaleX(0.88);transform-origin:100% 50%;">0</div>
<div class="t" style="top:194.49px;font-size:9px;line-height:9px;color:#000;right:513.6px;transform:scaleX(0.88);transform-origin:100% 50%;">0</div>
<div class="t" style="top:194.49px;font-size:9px;line-height:9px;color:#000;right:475.2px;transform:scaleX(0.88);transform-origin:100% 50%;">0</div>
<div class="t" style="top:194.49px;font-size:9px;line-height:9px;color:#000;right:434.48px;transform:scaleX(0.88);transform-origin:100% 50%;">0</div>
<div class="t" style="top:194.49px;font-size:9px;line-height:9px;color:#000;right:395.85px;transform:scaleX(0.88);transform-origin:100% 50%;">0</div>
<div class="t" style="top:194.49px;font-size:9px;line-height:9px;color:#000;right:357.23px;transform:scaleX(0.88);transform-origin:100% 50%;">0</div>
<div class="t" style="top:194.49px;font-size:9px;line-height:9px;color:#ff0000;right:318.6px;transform:scaleX(0.88);transform-origin:100% 50%;">331</div>
<div class="t" style="top:194.49px;font-size:9px;line-height:9px;color:#ff0000;right:279.98px;transform:scaleX(0.88);transform-origin:100% 50%;">894</div>
<div class="t" style="top:194.49px;font-size:9px;line-height:9px;color:#ff0000;right:241.35px;transform:scaleX(0.88);transform-origin:100% 50%;">1,962</div>
<div class="t" style="top:194.49px;font-size:9px;line-height:9px;color:#ff0000;right:202.73px;transform:scaleX(0.88);transform-origin:100% 50%;">3,017</div>
<div class="t" style="top:194.49px;font-size:9px;line-height:9px;color:#ff0000;right:164.1px;transform:scaleX(0.88);transform-origin:100% 50%;">3,942</div>
<div class="t" style="top:194.49px;font-size:9px;line-height:9px;color:#ff0000;right:125.48px;transform:scaleX(0.88);transform-origin:100% 50%;">4,341</div>
<div class="t" style="top:194.49px;font-size:9px;line-height:9px;color:#ff0000;right:86.85px;transform:scaleX(0.88);transform-origin:100% 50%;">4,450</div>
<div class="t" style="top:194.49px;font-size:9px;line-height:9px;color:#ff0000;right:48.23px;transform:scaleX(0.88);transform-origin:100% 50%;">4,549</div>
<div class="t" style="top:194.49px;font-size:9px;line-height:9px;color:#ff0000;right:9.6px;transform:scaleX(0.88);transform-origin:100% 50%;">4,657</div>
<div class="t" style="top:207.71px;font-size:8.3px;line-height:8.3px;color:#000;letter-spacing:0.25px;left:13px;">Total Dem</div>
<div class="t" style="top:207.12px;font-size:9px;line-height:9px;color:#000;right:552px;transform:scaleX(0.88);transform-origin:100% 50%;">0</div>
<div class="t" style="top:207.12px;font-size:9px;line-height:9px;color:#000;right:513.6px;transform:scaleX(0.88);transform-origin:100% 50%;">0</div>
<div class="t" style="top:207.12px;font-size:9px;line-height:9px;color:#000;right:475.2px;transform:scaleX(0.88);transform-origin:100% 50%;">0</div>
<div class="t" style="top:207.12px;font-size:9px;line-height:9px;color:#000;right:434.48px;transform:scaleX(0.88);transform-origin:100% 50%;">0</div>
<div class="t" style="top:207.12px;font-size:9px;line-height:9px;color:#000;right:395.85px;transform:scaleX(0.88);transform-origin:100% 50%;">0</div>
<div class="t" style="top:207.12px;font-size:9px;line-height:9px;color:#000;right:357.23px;transform:scaleX(0.88);transform-origin:100% 50%;">0</div>
<div class="t" style="top:207.12px;font-size:9px;line-height:9px;color:#000;right:318.6px;transform:scaleX(0.88);transform-origin:100% 50%;">331</div>
<div class="t" style="top:207.12px;font-size:9px;line-height:9px;color:#000;right:279.98px;transform:scaleX(0.88);transform-origin:100% 50%;">563</div>
<div class="t" style="top:207.12px;font-size:9px;line-height:9px;color:#000;right:241.35px;transform:scaleX(0.88);transform-origin:100% 50%;">1,068</div>
<div class="t" style="top:207.12px;font-size:9px;line-height:9px;color:#000;right:202.73px;transform:scaleX(0.88);transform-origin:100% 50%;">1,068</div>
<div class="t" style="top:207.12px;font-size:9px;line-height:9px;color:#000;right:164.1px;transform:scaleX(0.88);transform-origin:100% 50%;">1,068</div>
<div class="t" style="top:207.12px;font-size:9px;line-height:9px;color:#000;right:125.48px;transform:scaleX(0.88);transform-origin:100% 50%;">1,068</div>
<div class="t" style="top:207.12px;font-size:9px;line-height:9px;color:#000;right:86.85px;transform:scaleX(0.88);transform-origin:100% 50%;">1,068</div>
<div class="t" style="top:207.12px;font-size:9px;line-height:9px;color:#000;right:48.23px;transform:scaleX(0.88);transform-origin:100% 50%;">1,068</div>
<div class="t" style="top:207.12px;font-size:9px;line-height:9px;color:#000;right:9.6px;transform:scaleX(0.88);transform-origin:100% 50%;">1,078</div>
<div class="t" style="top:220.34px;font-size:8.3px;line-height:8.3px;color:#000;letter-spacing:0.25px;left:13px;">Shipments</div>
<div class="t" style="top:219.75px;font-size:9px;line-height:9px;color:#000;right:552px;transform:scaleX(0.88);transform-origin:100% 50%;">0</div>
<div class="t" style="top:219.75px;font-size:9px;line-height:9px;color:#000;right:513.6px;transform:scaleX(0.88);transform-origin:100% 50%;">0</div>
<div class="t" style="top:219.75px;font-size:9px;line-height:9px;color:#000;right:475.2px;transform:scaleX(0.88);transform-origin:100% 50%;">0</div>
<div class="t" style="top:219.75px;font-size:9px;line-height:9px;color:#000;right:434.48px;transform:scaleX(0.88);transform-origin:100% 50%;">0</div>
<div class="t" style="top:219.75px;font-size:9px;line-height:9px;color:#000;right:395.85px;transform:scaleX(0.88);transform-origin:100% 50%;">0</div>
<div class="t" style="top:219.75px;font-size:9px;line-height:9px;color:#000;right:357.23px;transform:scaleX(0.88);transform-origin:100% 50%;">0</div>
<div class="t" style="top:219.75px;font-size:9px;line-height:9px;color:#000;right:318.6px;transform:scaleX(0.88);transform-origin:100% 50%;">331</div>
<div class="t" style="top:219.75px;font-size:9px;line-height:9px;color:#000;right:279.98px;transform:scaleX(0.88);transform-origin:100% 50%;">563</div>
<div class="t" style="top:219.75px;font-size:9px;line-height:9px;color:#000;right:241.35px;transform:scaleX(0.88);transform-origin:100% 50%;">1,068</div>
<div class="t" style="top:219.75px;font-size:9px;line-height:9px;color:#000;right:202.73px;transform:scaleX(0.88);transform-origin:100% 50%;">1,068</div>
<div class="t" style="top:219.75px;font-size:9px;line-height:9px;color:#000;right:164.1px;transform:scaleX(0.88);transform-origin:100% 50%;">1,068</div>
<div class="t" style="top:219.75px;font-size:9px;line-height:9px;color:#000;right:125.48px;transform:scaleX(0.88);transform-origin:100% 50%;">1,068</div>
<div class="t" style="top:219.75px;font-size:9px;line-height:9px;color:#000;right:86.85px;transform:scaleX(0.88);transform-origin:100% 50%;">1,068</div>
<div class="t" style="top:219.75px;font-size:9px;line-height:9px;color:#000;right:48.23px;transform:scaleX(0.88);transform-origin:100% 50%;">1,068</div>
<div class="t" style="top:219.75px;font-size:9px;line-height:9px;color:#000;right:9.6px;transform:scaleX(0.88);transform-origin:100% 50%;">1,078</div>
<div class="t" style="top:232.97px;font-size:8.3px;line-height:8.3px;color:#008000;letter-spacing:0.25px;left:13px;">Sell $ (ASP)</div>
<div class="t" style="top:232.38px;font-size:9px;line-height:9px;color:#008000;right:552px;transform:scaleX(0.88);transform-origin:100% 50%;">$0.00</div>
<div class="t" style="top:232.38px;font-size:9px;line-height:9px;color:#008000;right:513.6px;transform:scaleX(0.88);transform-origin:100% 50%;">$0.00</div>
<div class="t" style="top:232.38px;font-size:9px;line-height:9px;color:#008000;right:475.2px;transform:scaleX(0.88);transform-origin:100% 50%;">$0.00</div>
<div class="t" style="top:232.38px;font-size:9px;line-height:9px;color:#008000;right:434.48px;transform:scaleX(0.88);transform-origin:100% 50%;">$0.00</div>
<div class="t" style="top:232.38px;font-size:9px;line-height:9px;color:#008000;right:395.85px;transform:scaleX(0.88);transform-origin:100% 50%;">$0.00</div>
<div class="t" style="top:232.38px;font-size:9px;line-height:9px;color:#008000;right:357.23px;transform:scaleX(0.88);transform-origin:100% 50%;">$0.00</div>
<div class="t" style="top:232.38px;font-size:9px;line-height:9px;color:#008000;right:318.6px;transform:scaleX(0.88);transform-origin:100% 50%;">$0.05</div>
<div class="t" style="top:232.38px;font-size:9px;line-height:9px;color:#008000;right:279.98px;transform:scaleX(0.88);transform-origin:100% 50%;">$0.06</div>
<div class="t" style="top:232.38px;font-size:9px;line-height:9px;color:#008000;right:241.35px;transform:scaleX(0.88);transform-origin:100% 50%;">$0.06</div>
<div class="t" style="top:232.38px;font-size:9px;line-height:9px;color:#008000;right:202.73px;transform:scaleX(0.88);transform-origin:100% 50%;">$0.06</div>
<div class="t" style="top:232.38px;font-size:9px;line-height:9px;color:#008000;right:164.1px;transform:scaleX(0.88);transform-origin:100% 50%;">$0.06</div>
<div class="t" style="top:232.38px;font-size:9px;line-height:9px;color:#008000;right:125.48px;transform:scaleX(0.88);transform-origin:100% 50%;">$0.06</div>
<div class="t" style="top:232.38px;font-size:9px;line-height:9px;color:#008000;right:86.85px;transform:scaleX(0.88);transform-origin:100% 50%;">$0.06</div>
<div class="t" style="top:232.38px;font-size:9px;line-height:9px;color:#008000;right:48.23px;transform:scaleX(0.88);transform-origin:100% 50%;">$0.06</div>
<div class="t" style="top:232.38px;font-size:9px;line-height:9px;color:#008000;right:9.6px;transform:scaleX(0.88);transform-origin:100% 50%;">$0.06</div>
<div class="t" style="top:245.6px;font-size:8.3px;line-height:8.3px;color:#008000;letter-spacing:0.25px;left:13px;">Cost $ (AC)</div>
<div class="t" style="top:245.01px;font-size:9px;line-height:9px;color:#008000;right:552px;transform:scaleX(0.88);transform-origin:100% 50%;">$0.00</div>
<div class="t" style="top:245.01px;font-size:9px;line-height:9px;color:#008000;right:513.6px;transform:scaleX(0.88);transform-origin:100% 50%;">$0.00</div>
<div class="t" style="top:245.01px;font-size:9px;line-height:9px;color:#008000;right:475.2px;transform:scaleX(0.88);transform-origin:100% 50%;">$0.00</div>
<div class="t" style="top:245.01px;font-size:9px;line-height:9px;color:#008000;right:434.48px;transform:scaleX(0.88);transform-origin:100% 50%;">$0.00</div>
<div class="t" style="top:245.01px;font-size:9px;line-height:9px;color:#008000;right:395.85px;transform:scaleX(0.88);transform-origin:100% 50%;">$0.00</div>
<div class="t" style="top:245.01px;font-size:9px;line-height:9px;color:#008000;right:357.23px;transform:scaleX(0.88);transform-origin:100% 50%;">$0.00</div>
<div class="t" style="top:245.01px;font-size:9px;line-height:9px;color:#008000;right:318.6px;transform:scaleX(0.88);transform-origin:100% 50%;">$0.01</div>
<div class="t" style="top:245.01px;font-size:9px;line-height:9px;color:#008000;right:279.98px;transform:scaleX(0.88);transform-origin:100% 50%;">$0.01</div>
<div class="t" style="top:245.01px;font-size:9px;line-height:9px;color:#008000;right:241.35px;transform:scaleX(0.88);transform-origin:100% 50%;">$0.01</div>
<div class="t" style="top:245.01px;font-size:9px;line-height:9px;color:#008000;right:202.73px;transform:scaleX(0.88);transform-origin:100% 50%;">$0.01</div>
<div class="t" style="top:245.01px;font-size:9px;line-height:9px;color:#008000;right:164.1px;transform:scaleX(0.88);transform-origin:100% 50%;">$0.01</div>
<div class="t" style="top:245.01px;font-size:9px;line-height:9px;color:#008000;right:125.48px;transform:scaleX(0.88);transform-origin:100% 50%;">$0.01</div>
<div class="t" style="top:245.01px;font-size:9px;line-height:9px;color:#008000;right:86.85px;transform:scaleX(0.88);transform-origin:100% 50%;">$0.01</div>
<div class="t" style="top:245.01px;font-size:9px;line-height:9px;color:#008000;right:48.23px;transform:scaleX(0.88);transform-origin:100% 50%;">$0.01</div>
<div class="t" style="top:245.01px;font-size:9px;line-height:9px;color:#008000;right:9.6px;transform:scaleX(0.88);transform-origin:100% 50%;">$0.01</div>
<div class="t" style="top:258.23px;font-size:8.3px;line-height:8.3px;color:#008000;letter-spacing:0.25px;left:13px;">Inv $ (AC)</div>
<div class="t" style="top:257.64px;font-size:9px;line-height:9px;color:#008000;right:552px;transform:scaleX(0.88);transform-origin:100% 50%;">$0.01</div>
<div class="t" style="top:257.64px;font-size:9px;line-height:9px;color:#008000;right:513.6px;transform:scaleX(0.88);transform-origin:100% 50%;">$0.01</div>
<div class="t" style="top:257.64px;font-size:9px;line-height:9px;color:#008000;right:475.2px;transform:scaleX(0.88);transform-origin:100% 50%;">$0.01</div>
<div class="t" style="top:257.64px;font-size:9px;line-height:9px;color:#008000;right:434.48px;transform:scaleX(0.88);transform-origin:100% 50%;">$0.01</div>
<div class="t" style="top:257.64px;font-size:9px;line-height:9px;color:#008000;right:395.85px;transform:scaleX(0.88);transform-origin:100% 50%;">$0.01</div>
<div class="t" style="top:257.64px;font-size:9px;line-height:9px;color:#008000;right:357.23px;transform:scaleX(0.88);transform-origin:100% 50%;">$0.01</div>
<div class="t" style="top:257.64px;font-size:9px;line-height:9px;color:#008000;right:318.6px;transform:scaleX(0.88);transform-origin:100% 50%;">$0.01</div>
<div class="t" style="top:257.64px;font-size:9px;line-height:9px;color:#008000;right:279.98px;transform:scaleX(0.88);transform-origin:100% 50%;">$0.01</div>
<div class="t" style="top:257.64px;font-size:9px;line-height:9px;color:#008000;right:241.35px;transform:scaleX(0.88);transform-origin:100% 50%;">$0.01</div>
<div class="t" style="top:257.64px;font-size:9px;line-height:9px;color:#008000;right:202.73px;transform:scaleX(0.88);transform-origin:100% 50%;">$0.01</div>
<div class="t" style="top:257.64px;font-size:9px;line-height:9px;color:#008000;right:164.1px;transform:scaleX(0.88);transform-origin:100% 50%;">$0.01</div>
<div class="t" style="top:257.64px;font-size:9px;line-height:9px;color:#008000;right:125.48px;transform:scaleX(0.88);transform-origin:100% 50%;">$0.01</div>
<div class="t" style="top:257.64px;font-size:9px;line-height:9px;color:#008000;right:86.85px;transform:scaleX(0.88);transform-origin:100% 50%;">$0.01</div>
<div class="t" style="top:257.64px;font-size:9px;line-height:9px;color:#008000;right:48.23px;transform:scaleX(0.88);transform-origin:100% 50%;">$0.01</div>
<div class="t" style="top:257.64px;font-size:9px;line-height:9px;color:#008000;right:9.6px;transform:scaleX(0.88);transform-origin:100% 50%;">$0.01</div>
<div class="r" style="left:220.3px;top:105.6px;width:2.2px;height:9.2px;background:#000;"></div>
<div class="r" style="left:68px;top:269.49px;width:115.5px;height:11.51px;background:#e9e7e3;"></div>
<div class="r" style="left:69px;top:269.99px;width:10px;height:11px;background:#d4d0c8;border-top:1px solid #fff;border-left:1px solid #fff;border-bottom:1.6px solid #404040;border-right:1.6px solid #404040;box-sizing:border-box;"></div>
<div class="r" style="left:162px;top:269.99px;width:9px;height:11px;background:#d4d0c8;border-top:1px solid #fff;border-left:1px solid #fff;border-bottom:1.6px solid #404040;border-right:1.6px solid #404040;box-sizing:border-box;"></div>
<div class="r" style="left:171px;top:269.99px;width:12px;height:11px;background:#d4d0c8;border-top:1px solid #fff;border-left:1px solid #fff;border-bottom:1.6px solid #404040;border-right:1.6px solid #404040;box-sizing:border-box;"></div>
<div class="r" style="left:185.5px;top:269.49px;width:463.5px;height:11.51px;background:#e9e7e3;"></div>
<div class="r" style="left:186px;top:269.99px;width:10.5px;height:11px;background:#d4d0c8;border-top:1px solid #fff;border-left:1px solid #fff;border-bottom:1.6px solid #404040;border-right:1.6px solid #404040;box-sizing:border-box;"></div>
<div class="r" style="left:196.5px;top:269.99px;width:146.5px;height:11px;background:#d4d0c8;border-top:1px solid #fff;border-left:1px solid #fff;border-bottom:1.6px solid #404040;border-right:1.6px solid #404040;box-sizing:border-box;"></div>
<div class="r" style="left:638.5px;top:269.99px;width:10.5px;height:11px;background:#d4d0c8;border-top:1px solid #fff;border-left:1px solid #fff;border-bottom:1.6px solid #404040;border-right:1.6px solid #404040;box-sizing:border-box;"></div>
<svg class="r" style="left:0;top:269.49px" width="657" height="12" viewBox="0 0 657 12">
<path d="M72.5 6L75.5 3V9Z" fill="#000"/>
<path d="M178 6L175 3V9Z" fill="#000"/>
<path d="M189.5 6L192.5 3V9Z" fill="#000"/>
<path d="M645 6L642 3V9Z" fill="#000"/>
</svg>
<div class="r" style="left:8px;top:281px;width:649px;height:1px;background:#f0f0f0;"></div>
<div class="r" style="left:8px;top:283px;width:641.5px;height:144px;background:#fff;border-top:2px solid #303030;border-left:1px solid #000;box-sizing:border-box;"></div>
<div class="r" style="left:8px;top:427px;width:649px;height:4.3px;background:#e4e2de;"></div>
<div class="r" style="left:8px;top:431.3px;width:649px;height:2.2px;background:#404040;"></div>
<div class="r" style="left:649.5px;top:60px;width:5.5px;height:371.3px;background:#dfddd8;"></div>
<div class="r" style="left:655px;top:60px;width:2px;height:373.5px;background:#505050;"></div>
<svg class="r" style="left:0;top:0" width="657" height="434" viewBox="0 0 657 434">
<rect x="35" y="295.3" width="610" height="11.19" fill="#c0c0c0"/>
<rect x="35" y="306.49" width="610" height="5.76" fill="#c9c9c9"/>
<rect x="35" y="312.25" width="610" height="16.95" fill="#cfcfcf"/>
<rect x="35" y="329.2" width="610" height="16.95" fill="#d6d6d6"/>
<rect x="35" y="346.15" width="610" height="16.95" fill="#e2e2e2"/>
<rect x="35" y="363.1" width="610" height="16.95" fill="#ebebeb"/>
<rect x="35" y="380.05" width="610" height="16.95" fill="#f3f3f3"/>
<path d="M35 294.8H645" stroke="#e8e8e8" stroke-width="1"/>
<path d="M35 380.05H645" stroke="#bcbcbc" stroke-width="1.2"/>
<path d="M35 363.1H645" stroke="#bcbcbc" stroke-width="1.2"/>
<path d="M35 346.15H645" stroke="#bcbcbc" stroke-width="1.2"/>
<path d="M35 329.2H645" stroke="#bcbcbc" stroke-width="1.2"/>
<path d="M35 312.25H645" stroke="#bcbcbc" stroke-width="1.2"/>
<path d="M32.5 397H35" stroke="#000" stroke-width="1"/>
<path d="M32.5 380.05H35" stroke="#000" stroke-width="1"/>
<path d="M32.5 363.1H35" stroke="#000" stroke-width="1"/>
<path d="M32.5 346.15H35" stroke="#000" stroke-width="1"/>
<path d="M32.5 329.2H35" stroke="#000" stroke-width="1"/>
<path d="M32.5 312.25H35" stroke="#000" stroke-width="1"/>
<path d="M32.5 295.3H35" stroke="#000" stroke-width="1"/>
<path d="M34.5 295.3V397" stroke="#303030" stroke-width="0.9"/>
<path d="M114.07 397 L136.67 306.49 L385.19 306.49 L407.78 397 Z" fill="#ffff00" stroke="#000" stroke-width="0.8"/>
<rect x="174.75" y="368.95" width="14.2" height="28.05" fill="#ff0000" stroke="#000" stroke-width="0.7"/>
<rect x="197.34" y="349.29" width="14.2" height="47.71" fill="#ff0000" stroke="#000" stroke-width="0.7"/>
<rect x="219.94" y="306.49" width="14.2" height="90.51" fill="#ff0000" stroke="#000" stroke-width="0.7"/>
<rect x="242.53" y="306.49" width="14.2" height="90.51" fill="#ff0000" stroke="#000" stroke-width="0.7"/>
<rect x="265.12" y="306.49" width="14.2" height="90.51" fill="#ff0000" stroke="#000" stroke-width="0.7"/>
<rect x="287.71" y="306.49" width="14.2" height="90.51" fill="#ff0000" stroke="#000" stroke-width="0.7"/>
<rect x="310.31" y="306.49" width="14.2" height="90.51" fill="#ff0000" stroke="#000" stroke-width="0.7"/>
<rect x="332.9" y="306.49" width="14.2" height="90.51" fill="#ff0000" stroke="#000" stroke-width="0.7"/>
<rect x="355.49" y="306.49" width="14.2" height="90.51" fill="#ff0000" stroke="#000" stroke-width="0.7"/>
<rect x="378.09" y="306.49" width="14.2" height="90.51" fill="#ff0000" stroke="#000" stroke-width="0.7"/>
<rect x="400.68" y="306.49" width="14.2" height="90.51" fill="#ff0000" stroke="#000" stroke-width="0.7"/>
<rect x="423.27" y="306.49" width="14.2" height="90.51" fill="#ff0000" stroke="#000" stroke-width="0.7"/>
<rect x="445.86" y="306.49" width="14.2" height="90.51" fill="#ff0000" stroke="#000" stroke-width="0.7"/>
<rect x="468.46" y="306.49" width="14.2" height="90.51" fill="#ff0000" stroke="#000" stroke-width="0.7"/>
<rect x="491.05" y="306.49" width="14.2" height="90.51" fill="#ff0000" stroke="#000" stroke-width="0.7"/>
<rect x="513.64" y="306.49" width="14.2" height="90.51" fill="#ff0000" stroke="#000" stroke-width="0.7"/>
<rect x="536.23" y="306.49" width="14.2" height="90.51" fill="#ff0000" stroke="#000" stroke-width="0.7"/>
<rect x="558.83" y="306.49" width="14.2" height="90.51" fill="#ff0000" stroke="#000" stroke-width="0.7"/>
<rect x="581.42" y="306.49" width="14.2" height="90.51" fill="#ff0000" stroke="#000" stroke-width="0.7"/>
<rect x="604.01" y="306.49" width="14.2" height="90.51" fill="#ff0000" stroke="#000" stroke-width="0.7"/>
<rect x="626.6" y="306.49" width="14.2" height="90.51" fill="#ff0000" stroke="#000" stroke-width="0.7"/>
<path d="M35 396.7H362.59" stroke="#000" stroke-width="1.2"/>
<path d="M362.59 396.7H645" stroke="#3030ff" stroke-width="1.2"/>
<path d="M35 397V399" stroke="#606060" stroke-width="0.8"/>
<path d="M57.59 397V399" stroke="#606060" stroke-width="0.8"/>
<path d="M80.19 397V399" stroke="#606060" stroke-width="0.8"/>
<path d="M102.78 397V399" stroke="#606060" stroke-width="0.8"/>
<path d="M125.37 397V399" stroke="#606060" stroke-width="0.8"/>
<path d="M147.96 397V399" stroke="#606060" stroke-width="0.8"/>
<path d="M170.56 397V399" stroke="#606060" stroke-width="0.8"/>
<path d="M193.15 397V399" stroke="#606060" stroke-width="0.8"/>
<path d="M215.74 397V399" stroke="#606060" stroke-width="0.8"/>
<path d="M238.33 397V399" stroke="#606060" stroke-width="0.8"/>
<path d="M260.93 397V399" stroke="#606060" stroke-width="0.8"/>
<path d="M283.52 397V399" stroke="#606060" stroke-width="0.8"/>
<path d="M306.11 397V399" stroke="#606060" stroke-width="0.8"/>
<path d="M328.7 397V399" stroke="#606060" stroke-width="0.8"/>
<path d="M351.3 397V399" stroke="#606060" stroke-width="0.8"/>
<path d="M373.89 397V399" stroke="#606060" stroke-width="0.8"/>
<path d="M396.48 397V399" stroke="#606060" stroke-width="0.8"/>
<path d="M419.07 397V399" stroke="#606060" stroke-width="0.8"/>
<path d="M441.67 397V399" stroke="#606060" stroke-width="0.8"/>
<path d="M464.26 397V399" stroke="#606060" stroke-width="0.8"/>
<path d="M486.85 397V399" stroke="#606060" stroke-width="0.8"/>
<path d="M509.44 397V399" stroke="#606060" stroke-width="0.8"/>
<path d="M532.04 397V399" stroke="#606060" stroke-width="0.8"/>
<path d="M554.63 397V399" stroke="#606060" stroke-width="0.8"/>
<path d="M577.22 397V399" stroke="#606060" stroke-width="0.8"/>
<path d="M599.81 397V399" stroke="#606060" stroke-width="0.8"/>
<path d="M622.41 397V399" stroke="#606060" stroke-width="0.8"/>
<path d="M645 397V399" stroke="#606060" stroke-width="0.8"/>
<circle cx="46.3" cy="397" r="1.3" fill="#ff8000"/>
<circle cx="68.89" cy="397" r="1.3" fill="#ff8000"/>
<circle cx="91.48" cy="397" r="1.3" fill="#ff8000"/>
<circle cx="114.07" cy="397" r="1.3" fill="#ff8000"/>
<circle cx="136.67" cy="397" r="1.3" fill="#ff8000"/>
<circle cx="159.26" cy="397" r="1.3" fill="#ff8000"/>
<circle cx="181.85" cy="397" r="1.3" fill="#ff8000"/>
<circle cx="204.44" cy="397" r="1.3" fill="#ff8000"/>
<circle cx="227.04" cy="397" r="1.3" fill="#ff8000"/>
<circle cx="249.63" cy="397" r="1.3" fill="#ff8000"/>
<circle cx="272.22" cy="397" r="1.3" fill="#ff8000"/>
<circle cx="294.81" cy="397" r="1.3" fill="#ff8000"/>
<circle cx="317.41" cy="397" r="1.3" fill="#ff8000"/>
<circle cx="340" cy="397" r="1.3" fill="#ff8000"/>
<circle cx="362.59" cy="397" r="1.3" fill="#ff8000"/>
<circle cx="385.19" cy="397" r="1.3" fill="#ff8000"/>
<circle cx="407.78" cy="397" r="1.3" fill="#ff8000"/>
<circle cx="430.37" cy="397" r="1.3" fill="#ff8000"/>
<circle cx="452.96" cy="397" r="1.3" fill="#ff8000"/>
<circle cx="475.56" cy="397" r="1.3" fill="#ff8000"/>
<circle cx="498.15" cy="397" r="1.3" fill="#ff8000"/>
<circle cx="520.74" cy="397" r="1.3" fill="#ff8000"/>
<circle cx="543.33" cy="397" r="1.3" fill="#ff8000"/>
<circle cx="565.93" cy="397" r="1.3" fill="#ff8000"/>
<circle cx="588.52" cy="397" r="1.3" fill="#ff8000"/>
<circle cx="611.11" cy="397" r="1.3" fill="#ff8000"/>
<circle cx="633.7" cy="397" r="1.3" fill="#ff8000"/>
</svg>
<div class="t" style="top:393.44px;font-size:7.4px;line-height:7.4px;color:#000;right:627.5px;">0</div>
<div class="t" style="top:376.49px;font-size:7.4px;line-height:7.4px;color:#000;right:627.5px;">200</div>
<div class="t" style="top:359.54px;font-size:7.4px;line-height:7.4px;color:#000;right:627.5px;">400</div>
<div class="t" style="top:342.59px;font-size:7.4px;line-height:7.4px;color:#000;right:627.5px;">600</div>
<div class="t" style="top:325.64px;font-size:7.4px;line-height:7.4px;color:#000;right:627.5px;">800</div>
<div class="t" style="top:308.69px;font-size:7.4px;line-height:7.4px;color:#000;right:627.5px;">1000</div>
<div class="t" style="top:291.74px;font-size:7.4px;line-height:7.4px;color:#000;right:627.5px;">1200</div>
<div class="t" style="top:403.94px;font-size:7.4px;line-height:7.4px;color:#000;left:46.3px;width:0;text-align:center;"><span class="c">-3</span></div>
<div class="t" style="top:403.94px;font-size:7.4px;line-height:7.4px;color:#000;left:68.89px;width:0;text-align:center;"><span class="c">-2</span></div>
<div class="t" style="top:403.94px;font-size:7.4px;line-height:7.4px;color:#000;left:91.48px;width:0;text-align:center;"><span class="c">-1</span></div>
<div class="t" style="top:403.94px;font-size:7.4px;line-height:7.4px;color:#000;left:114.07px;width:0;text-align:center;"><span class="c">1</span></div>
<div class="t" style="top:403.94px;font-size:7.4px;line-height:7.4px;color:#000;left:136.67px;width:0;text-align:center;"><span class="c">2</span></div>
<div class="t" style="top:403.94px;font-size:7.4px;line-height:7.4px;color:#000;left:159.26px;width:0;text-align:center;"><span class="c">3</span></div>
<div class="t" style="top:403.94px;font-size:7.4px;line-height:7.4px;color:#000;left:181.85px;width:0;text-align:center;"><span class="c">4</span></div>
<div class="t" style="top:403.94px;font-size:7.4px;line-height:7.4px;color:#000;left:204.44px;width:0;text-align:center;"><span class="c">5</span></div>
<div class="t" style="top:403.94px;font-size:7.4px;line-height:7.4px;color:#000;left:227.04px;width:0;text-align:center;"><span class="c">6</span></div>
<div class="t" style="top:403.94px;font-size:7.4px;line-height:7.4px;color:#000;left:249.63px;width:0;text-align:center;"><span class="c">7</span></div>
<div class="t" style="top:403.94px;font-size:7.4px;line-height:7.4px;color:#000;left:272.22px;width:0;text-align:center;"><span class="c">8</span></div>
<div class="t" style="top:403.94px;font-size:7.4px;line-height:7.4px;color:#000;left:294.81px;width:0;text-align:center;"><span class="c">9</span></div>
<div class="t" style="top:403.94px;font-size:7.4px;line-height:7.4px;color:#000;left:317.41px;width:0;text-align:center;"><span class="c">10</span></div>
<div class="t" style="top:403.94px;font-size:7.4px;line-height:7.4px;color:#000;left:340px;width:0;text-align:center;"><span class="c">11</span></div>
<div class="t" style="top:403.94px;font-size:7.4px;line-height:7.4px;color:#000;left:362.59px;width:0;text-align:center;"><span class="c">12</span></div>
<div class="t" style="top:403.94px;font-size:7.4px;line-height:7.4px;color:#000;left:385.19px;width:0;text-align:center;"><span class="c">13</span></div>
<div class="t" style="top:403.94px;font-size:7.4px;line-height:7.4px;color:#000;left:407.78px;width:0;text-align:center;"><span class="c">14</span></div>
<div class="t" style="top:403.94px;font-size:7.4px;line-height:7.4px;color:#000;left:430.37px;width:0;text-align:center;"><span class="c">15</span></div>
<div class="t" style="top:403.94px;font-size:7.4px;line-height:7.4px;color:#000;left:452.96px;width:0;text-align:center;"><span class="c">16</span></div>
<div class="t" style="top:403.94px;font-size:7.4px;line-height:7.4px;color:#000;left:475.56px;width:0;text-align:center;"><span class="c">17</span></div>
<div class="t" style="top:403.94px;font-size:7.4px;line-height:7.4px;color:#000;left:498.15px;width:0;text-align:center;"><span class="c">18</span></div>
<div class="t" style="top:403.94px;font-size:7.4px;line-height:7.4px;color:#000;left:520.74px;width:0;text-align:center;"><span class="c">19</span></div>
<div class="t" style="top:403.94px;font-size:7.4px;line-height:7.4px;color:#000;left:543.33px;width:0;text-align:center;"><span class="c">20</span></div>
<div class="t" style="top:403.94px;font-size:7.4px;line-height:7.4px;color:#000;left:565.93px;width:0;text-align:center;"><span class="c">21</span></div>
<div class="t" style="top:403.94px;font-size:7.4px;line-height:7.4px;color:#000;left:588.52px;width:0;text-align:center;"><span class="c">22</span></div>
<div class="t" style="top:403.94px;font-size:7.4px;line-height:7.4px;color:#000;left:611.11px;width:0;text-align:center;"><span class="c">23</span></div>
<div class="t" style="top:403.94px;font-size:7.4px;line-height:7.4px;color:#000;left:633.7px;width:0;text-align:center;"><span class="c">24</span></div>
<div class="r" style="left:603.5px;top:289.5px;width:41.5px;height:13px;background:#d4d0c8;border-top:1px solid #fff;border-left:1px solid #fff;border-bottom:1.6px solid #404040;border-right:1.6px solid #404040;box-sizing:border-box;"></div>
<div class="t" style="top:292.53px;font-size:8px;line-height:8px;color:#000;left:624.2px;width:0;text-align:center;"><span class="c">Refresh</span></div>
<div class="r" style="left:609.3px;top:299.3px;width:5px;height:0.8px;background:#000;"></div>
<div class="r" style="left:21.5px;top:414.5px;width:602.5px;height:11.3px;background:#fff;border:1px solid #707070;border-radius:1px;box-sizing:border-box;"></div>
<div class="r" style="left:28px;top:417.8px;width:17.5px;height:4.9px;background:#ffff00;border:0.8px solid #505050;border-radius:1px;box-sizing:border-box;"></div>
<div class="t" style="top:416.61px;font-size:7.9px;line-height:7.9px;color:#000;left:47.4px;transform:scaleX(0.85);transform-origin:0 50%;">BUDGET</div>
<div class="r" style="left:89px;top:417.8px;width:17.5px;height:4.9px;background:#008000;border:0.8px solid #505050;border-radius:1px;box-sizing:border-box;"></div>
<div class="t" style="top:416.61px;font-size:7.9px;line-height:7.9px;color:#000;left:108.8px;transform:scaleX(0.85);transform-origin:0 50%;">SHIPMENTS</div>
<div class="r" style="left:162.6px;top:417.8px;width:17.5px;height:4.9px;background:#ff0000;border:0.8px solid #505050;border-radius:1px;box-sizing:border-box;"></div>
<div class="t" style="top:416.61px;font-size:7.9px;line-height:7.9px;color:#000;left:182px;transform:scaleX(0.85);transform-origin:0 50%;">DEMAND</div>
<div class="r" style="left:225px;top:417.8px;width:17.5px;height:4.9px;background:#a6caf0;border:0.8px solid #505050;border-radius:1px;box-sizing:border-box;"></div>
<div class="t" style="top:416.61px;font-size:7.9px;line-height:7.9px;color:#000;left:244.4px;transform:scaleX(0.85);transform-origin:0 50%;">INTRA</div>
<div class="r" style="left:279.2px;top:417.8px;width:17.5px;height:4.9px;background:#00ff00;border:0.8px solid #505050;border-radius:1px;box-sizing:border-box;"></div>
<div class="t" style="top:416.61px;font-size:7.9px;line-height:7.9px;color:#000;left:298.4px;transform:scaleX(0.85);transform-origin:0 50%;">ORDERS</div>
<div class="r" style="left:339.3px;top:417.8px;width:17.5px;height:4.9px;background:#20c0c0;border:0.8px solid #505050;border-radius:1px;box-sizing:border-box;"></div>
<div class="t" style="top:416.61px;font-size:7.9px;line-height:7.9px;color:#000;left:359px;transform:scaleX(0.85);transform-origin:0 50%;">DEP DEM</div>
<div class="r" style="left:403.3px;top:417.8px;width:17.5px;height:4.9px;background:#d0a0e0;border:0.8px solid #505050;border-radius:1px;box-sizing:border-box;"></div>
<div class="t" style="top:416.61px;font-size:7.9px;line-height:7.9px;color:#000;left:422.3px;transform:scaleX(0.85);transform-origin:0 50%;">INTRA BO</div>
<div class="r" style="left:469px;top:419.6px;width:17.5px;height:1.3px;background:#3030ff;"></div>
<div class="r" style="left:476.5px;top:418.7px;width:3px;height:3px;border-radius:50%;background:#ff8000"></div>
<div class="t" style="top:416.61px;font-size:7.9px;line-height:7.9px;color:#000;left:488.8px;transform:scaleX(0.85);transform-origin:0 50%;">PREVIOUS PLAN</div>
<div class="r" style="left:558.6px;top:419.6px;width:17.5px;height:1.3px;background:#000;"></div>
<div class="t" style="top:416.61px;font-size:7.9px;line-height:7.9px;color:#000;left:577.8px;transform:scaleX(0.85);transform-origin:0 50%;">PRIOR YEAR</div>
</body></html>
